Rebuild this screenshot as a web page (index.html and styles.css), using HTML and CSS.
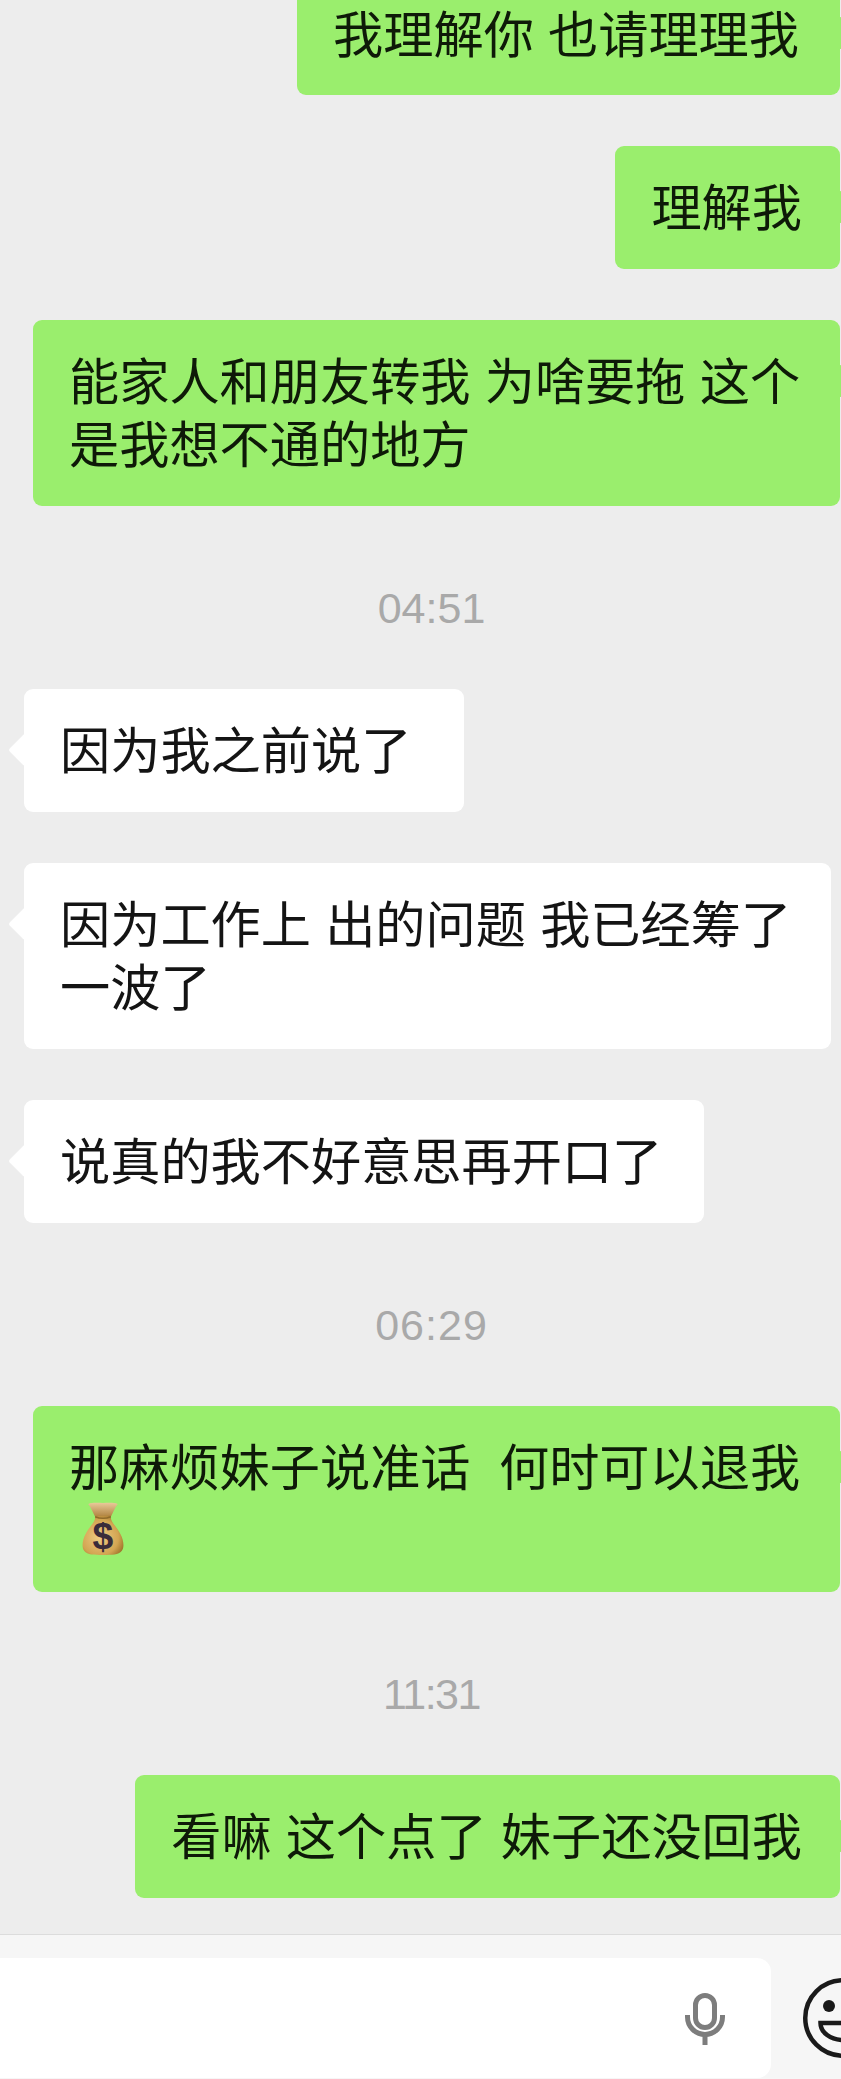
FILE: index.html
```html
<!DOCTYPE html>
<html>
<head>
    <title>Chat</title>
    <link rel="stylesheet" href="styles.css">
</head>
<body>
    <div class="chat">
        <div class="msg me"><div class="bubble bubble-cut">我理解你 也请理理我</div></div>
        <div class="msg me"><div class="bubble">理解我</div></div>
        <div class="msg me"><div class="bubble">能家人和朋友转我 为啥要拖 这个是我想不通的地方</div></div>
        <div class="time">04:51</div>
        <div class="msg other"><div class="bubble bubble-pad">因为我之前说了</div></div>
        <div class="msg other"><div class="bubble">因为工作上 出的问题 我已经筹了一波了</div></div>
        <div class="msg other"><div class="bubble bubble-pad-sm">说真的我不好意思再开口了</div></div>
        <div class="time time-wide">06:29</div>
        <div class="msg me">
            <div class="bubble bubble-full">那麻烦妹子说准话&nbsp; 何时可以退我
                <svg class="bag" viewBox="0 0 42 55" role="img" aria-label="💰">
                    <defs>
                        <radialGradient id="bagFill" cx="0.42" cy="0.55" r="0.65">
                            <stop offset="0" stop-color="#eecb84"/>
                            <stop offset="0.7" stop-color="#d3a552"/>
                            <stop offset="1" stop-color="#9c7028"/>
                        </radialGradient>
                        <linearGradient id="bagTop" x1="0" y1="0" x2="0" y2="1">
                            <stop offset="0" stop-color="#e9c99a"/>
                            <stop offset="1" stop-color="#b08340"/>
                        </linearGradient>
                    </defs>
                    <path d="M6 2 C11 0 17 1 21 1 C25 1 31 0 36 2 C33 6 31 11 29 15 L13 15 C11 11 9 6 6 2 Z" fill="url(#bagTop)"/>
                    <path d="M13 14 C14 20 7 25 3 33 C0 39 -1 46 2 50 C5 54 12 54 21 54 C30 54 37 54 40 50 C43 46 42 39 39 33 C35 25 28 20 29 14 Z" fill="url(#bagFill)"/>
                    <path d="M13 15 C18 17 24 17 29 15" fill="none" stroke="#8f6a2a" stroke-width="1.500"/>
                    <text class="bag-sign" x="21" y="48" text-anchor="middle">$</text>
                </svg>
            </div>
        </div>
        <div class="time time-narrow">11:31</div>
        <div class="msg me"><div class="bubble">看嘛 这个点了 妹子还没回我</div></div>
    </div>

    <div class="bar">
        <div class="input">
            <svg class="mic" viewBox="0 0 40 52">
                <rect x="10.500" y="2.500" width="19" height="32" rx="9.500" fill="none" stroke="#7d7d7d" stroke-width="5"/>
                <path d="M2.500 22 V24 A17.500 17.500 0 0 0 37.500 24 V22" fill="none" stroke="#7d7d7d" stroke-width="5"/>
                <rect x="17.500" y="42" width="5" height="10" fill="#7d7d7d"/>
            </svg>
        </div>
        <svg class="smile" viewBox="0 0 80 80">
            <circle cx="40" cy="40" r="37.750" fill="none" stroke="#1a1a1a" stroke-width="4.500"/>
            <circle cx="26" cy="28" r="6" fill="#1a1a1a"/>
            <path d="M17.500 45 H62.500 A22.500 17 0 0 1 17.500 45 Z" fill="none" stroke="#1a1a1a" stroke-width="4.500"/>
        </svg>
    </div>
</body>
</html>
```

FILE: styles.css
```css
html, body {
    margin: 0;
    height: 2079px;
    overflow: hidden;
}

body {
    position: relative;
    background-color: #ededed;
    color: #141414;
    font-family: "Noto Sans CJK SC", "Liberation Sans", sans-serif;
    font-size: 50.2px;
    line-height: 63px;
}

.chat {
    display: flex;
    flex-direction: column;
    gap: 51px;
}

.msg {
    display: flex;
}

.bubble {
    position: relative;
    padding: 27px 38px 33px 36px;
    border-radius: 9px;
    word-spacing: 3px;
}

/* arrow on the side of each message */
.bubble::before {
    content: "";
    position: absolute;
    top: 49px;
    width: 24px;
    height: 24px;
    background-color: inherit;
    border-radius: 3px;
    transform: rotate(45deg);
}

/* first message is scrolled off the top of the screen */
.bubble-cut {
    padding-top: 0;
    padding-right: 41px;
    padding-bottom: 32px;
    border-radius: 0 0 9px 9px;
}

.bubble-cut::before {
    top: 21px;
}

.bubble-pad {
    padding-right: 53px;
}

.bubble-pad-sm {
    padding-right: 42px;
}

.bubble-full {
    flex: 1;
}

.me {
    justify-content: flex-end;
    padding-left: 33px;
    padding-right: 1px;
}

.me .bubble {
    background-color: #9aee6d;
    color: #0e1a08;
}

.me .bubble::before {
    right: -12px;
    z-index: -1;
}

.other {
    padding-left: 24px;
    padding-right: 10px;
}

.other .bubble {
    background-color: #fff;
}

.other .bubble::before {
    left: -11px;
}

.time {
    margin: 26px 0 5px;
    padding-left: 22px;
    text-align: center;
    color: #a9a9a9;
    font-family: "Liberation Sans", sans-serif;
    font-size: 43px;
    line-height: 50px;
}

.time-wide {
    letter-spacing: 1px;
}

.time-narrow {
    letter-spacing: -1.5px;
}

.bag {
    display: block;
    width: 42px;
    height: 54px;
    margin: 6px 0 3px 13px;
}

.bag-sign {
    fill: #3a2c3a;
    font-family: "Liberation Sans", sans-serif;
    font-size: 38px;
    font-weight: bold;
}

.bar {
    position: absolute;
    left: 0;
    right: 0;
    top: 1934px;
    bottom: 0;
    display: flex;
    padding-top: 23px;
    overflow: hidden;
    background-color: #f6f6f6;
    border-top: 1px solid #dcdcdc;
}

.input {
    display: flex;
    justify-content: flex-end;
    flex: none;
    box-sizing: border-box;
    width: 771px;
    height: 120px;
    padding: 35px 46px 0 0;
    background-color: #fff;
    border-radius: 0 14px 14px 0;
}

.mic {
    width: 40px;
    height: 52px;
}

.smile {
    flex: none;
    width: 80px;
    height: 80px;
    margin-left: 32px;
    margin-top: 20px;
}
```
